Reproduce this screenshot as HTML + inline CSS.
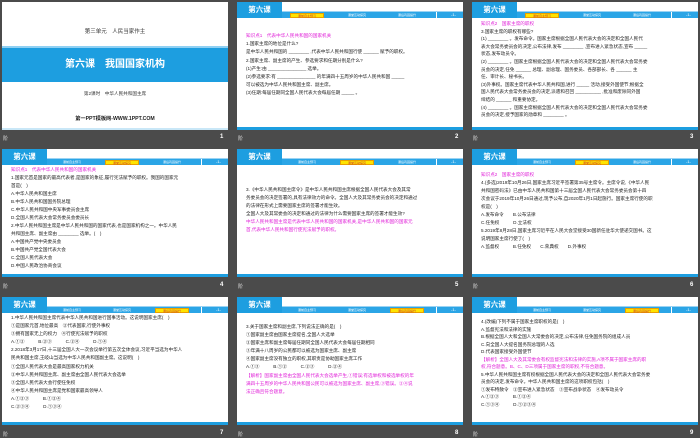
<!DOCTYPE html>
<html><head><meta charset="utf-8"><style>
*{margin:0;padding:0;box-sizing:border-box}
body{width:700px;height:438px;background:#4b4b4b;position:relative;overflow:hidden;font-family:"Liberation Sans","Noto Sans CJK SC",sans-serif}
.s{position:absolute;width:226px;height:128px;background:#fff;overflow:hidden}
.tab{position:absolute;left:0;top:0;width:45px;height:16px;background:#1d9ee0;color:#fff;font-size:7.5px;font-weight:bold;text-align:center;line-height:16px}
.strip{position:absolute;left:45px;top:9px;width:181px;height:7px;background:#2ba5e6;border-top:1px solid #9bd3f3}
.b{position:absolute;top:0.5px;width:34px;height:5px;font-size:3px;color:#fff;text-align:center;line-height:5px}
.b.y{background:#ffe400;color:#c33;border:0.5px solid #e9a000}
.sep{position:absolute;left:154px;top:0;width:1px;height:7px;background:#fff}
.pg{position:absolute;left:162px;top:0;width:19px;font-size:4px;color:#fff;text-align:center;line-height:6px}
.bot{position:absolute;left:0;bottom:0;width:226px;height:3px;background:#1d9ee0}
.t{position:absolute;left:9px;right:6px;font-size:4.6px;line-height:8.2px;color:#222;white-space:nowrap}
.m{color:#e021d8}
.lab{position:absolute;color:#ddd;font-size:5px}
.num{position:absolute;color:#fff;font-size:6px;font-weight:bold}
</style></head><body>

<div class="s" style="left:2px;top:2px">
 <div style="position:absolute;top:25px;width:100%;text-align:center;font-size:5.5px;color:#333">第三单元　人民当家作主</div>
 <div style="position:absolute;top:44px;width:100%;height:2px;background:#8fd0f3"></div>
 <div style="position:absolute;top:46px;width:100%;height:34px;background:#1d9ee0;color:#fff;font-size:10px;font-weight:bold;text-align:center;line-height:34px">第六课　我国国家机构</div>
 <div style="position:absolute;top:89px;width:100%;text-align:center;font-size:4.6px;color:#333">第2课时　中华人民共和国主席</div>
 <div style="position:absolute;top:113px;width:100%;text-align:center;font-size:5.2px;font-weight:bold;color:#222">第一PPT模板网-WWW.1PPT.COM</div>
 <div class="bot" style="height:2px;background:#c9e7f7"></div>
</div>

<div class="s" style="left:237px;top:2px">
 <div class="tab">第六课</div>
 <div class="strip"><div class="b y" style="left:8px">课前自主预习</div><div class="b" style="left:58px">课堂互动探究</div><div class="b" style="left:108px">课后巩固提升</div><div class="sep"></div><div class="pg">-1-</div></div>
 <div class="t" style="top:30px"><span class="m">知识点1　代表中华人民共和国的国家机关</span><br>1.国家主席的地位是什么?<br>是中华人民共和国的 ________ ,代表中华人民共和国行使 ______ 赋予的职权。<br>2.国家主席、副主席的产生、参选要求和任期分别是什么?<br>(1)产生:由 _______________ 选举。<br>(2)参选要求:有 _______________ 的年满四十五周岁的中华人民共和国 _____<br>可以被选为中华人民共和国主席、副主席。<br>(3)任期:每届任期同全国人民代表大会每届任期 _____ 。</div>
 <div class="bot"></div>
</div>

<div class="s" style="left:472px;top:2px">
 <div class="tab">第六课</div>
 <div class="strip"><div class="b y" style="left:8px">课前自主预习</div><div class="b" style="left:58px">课堂互动探究</div><div class="b" style="left:108px">课后巩固提升</div><div class="sep"></div><div class="pg">-1-</div></div>
 <div class="t" style="top:18px;line-height:7.6px"><span class="m">知识点2　国家主席的职权</span><br>3.国家主席的职权有哪些?<br>(1) ________ 。发布命令。国家主席根据全国人民代表大会的决定和全国人民代<br>表大会常务委员会的决定,公布法律,发布 ________ ,宣布进入紧急状态,宣布 _____<br>状态,发布动员令。<br>(2) ________ 。国家主席根据全国人民代表大会的决定和全国人民代表大会常务委<br>员会的决定,任免 ______ 总理、副总理、国务委员、各部部长、各 ______ 主<br>任、审计长、秘书长。<br>(3)外事权。国家主席代表中华人民共和国,进行 _____ 活动,接受外国使节;根据全<br>国人民代表大会常务委员会的决定,派遣和召回 __________ ,批准和废除同外国<br>缔结的 ______ 和重要协定。<br>(4) ________ 。国家主席根据全国人民代表大会的决定和全国人民代表大会常务委<br>员会的决定,授予国家的勋章和 ________ 。</div>
 <div class="bot"></div>
</div>

<div class="s" style="left:2px;top:149px">
 <div class="tab">第六课</div>
 <div class="strip"><div class="b" style="left:8px">课前自主预习</div><div class="b y" style="left:58px">课堂互动探究</div><div class="b" style="left:108px">课后巩固提升</div><div class="sep"></div><div class="pg">-1-</div></div>
 <div class="t" style="top:17px;line-height:8px"><span class="m">知识点1　代表中华人民共和国的国家机关</span><br>1.国家元首是国家的最高代表者,是国家的象征,履行宪法赋予的职权。我国的国家元<br>首是(　)<br>A.中华人民共和国主席<br>B.中华人民共和国国务院总理<br>C.中华人民共和国中央军事委员会主席<br>D.全国人民代表大会常务委员会委员长<br>2.中华人民共和国主席是中华人民共和国的国家代表,也是国家机构之一。中华人民<br>共和国主席、副主席由 ________ 选举。(　)<br>A.中国共产党中央委员会<br>B.中国共产党全国代表大会<br>C.全国人民代表大会<br>D.中国人民政治协商会议</div>
 <div class="bot"></div>
</div>

<div class="s" style="left:237px;top:149px">
 <div class="tab">第六课</div>
 <div class="strip"><div class="b" style="left:8px">课前自主预习</div><div class="b y" style="left:58px">课堂互动探究</div><div class="b" style="left:108px">课后巩固提升</div><div class="sep"></div><div class="pg">-1-</div></div>
 <div class="t" style="top:37px;line-height:8px">3.《中华人民共和国主席令》是中华人民共和国主席根据全国人民代表大会及其常<br>务委员会的决定签署的,具有法律效力的命令。全国人大及其常务委员会的决定和通过<br>的法律在形式上需要国家主席的签署才能生效。<br>全国人大及其常委会的决定和通过的法律为什么需要国家主席的签署才能生效?<br><span class="m">中华人民共和国主席是代表中华人民共和国的国家机关,是中华人民共和国的国家元<br>首,代表中华人民共和国行使宪法赋予的职权。</span></div>
 <div class="bot"></div>
</div>

<div class="s" style="left:472px;top:149px">
 <div class="tab">第六课</div>
 <div class="strip"><div class="b" style="left:8px">课前自主预习</div><div class="b y" style="left:58px">课堂互动探究</div><div class="b" style="left:108px">课后巩固提升</div><div class="sep"></div><div class="pg">-1-</div></div>
 <div class="t" style="top:22px;line-height:8px"><span class="m">知识点2　国家主席的职权</span><br>4.(多选)2019年10月26日,国家主席习近平签署第35号主席令。主席令说,《中华人民<br>共和国密码法》已由中华人民共和国第十三届全国人民代表大会常务委员会第十四<br>次会议于2019年10月26日通过,现予公布,自2020年1月1日起施行。国家主席行使的职<br>权是(　)<br>A.发布命令　　B.公布法律<br>C.任免权　　　D.立法权<br>5.2019年8月28日,国家主席习近平在人民大会堂接受30国新任驻华大使递交国书。这<br>说明国家主席行使了(　)<br>A.监督权　　　B.任免权　　C.荣典权　　D.外事权</div>
 <div class="bot"></div>
</div>

<div class="s" style="left:2px;top:297px">
 <div class="tab">第六课</div>
 <div class="strip"><div class="b" style="left:8px">课前自主预习</div><div class="b" style="left:58px">课堂互动探究</div><div class="b y" style="left:108px">课后巩固提升</div><div class="sep"></div><div class="pg">-1-</div></div>
 <div class="t" style="top:17px;line-height:8.1px">1.中华人民共和国主席代表中华人民共和国进行国事活动。这说明国家主席(　)<br>①是国家元首,地位最高　②代表国家,行使外事权<br>③拥有国家无上的权力　④行使宪法赋予的职权<br>A.①②　　　B.②③　　　C.②④　　　D.①④<br>2.2018年3月17日,十三届全国人大一次会议举行第五次全体会议,习近平当选为中华人<br>民共和国主席,王岐山当选为中华人民共和国副主席。这说明(　)<br>①全国人民代表大会是最高国家权力机关<br>②中华人民共和国主席、副主席由全国人民代表大会选举<br>③全国人民代表大会行使任免权<br>④中华人民共和国主席是党和国家最高领导人<br>A.①②③　　　B.①②④<br>C.②③④　　　D.①③④</div>
 <div class="bot"></div>
</div>

<div class="s" style="left:237px;top:297px">
 <div class="tab">第六课</div>
 <div class="strip"><div class="b" style="left:8px">课前自主预习</div><div class="b" style="left:58px">课堂互动探究</div><div class="b y" style="left:108px">课后巩固提升</div><div class="sep"></div><div class="pg">-1-</div></div>
 <div class="t" style="top:26px;line-height:8.1px">3.关于国家主席和副主席,下列说法正确的是(　)<br>①国家副主席由国家主席提名,全国人大选举<br>②国家主席和副主席每届任期同全国人民代表大会每届任期相同<br>③年满十八周岁的公民都可以被选为国家主席、副主席<br>④国家副主席没有独立的职权,其职责是协助国家主席工作<br>A.①③　　　B.①②　　　C.②③　　　D.②④<br><span class="m">【解析】国家副主席由全国人民代表大会选举产生,①错误;有选举权和被选举权的年<br>满四十五周岁的中华人民共和国公民可以被选为国家主席、副主席,③错误。②④说<br>法正确且符合题意。</span></div>
 <div class="bot"></div>
</div>

<div class="s" style="left:472px;top:297px">
 <div class="tab">第六课</div>
 <div class="strip"><div class="b" style="left:8px">课前自主预习</div><div class="b" style="left:58px">课堂互动探究</div><div class="b y" style="left:108px">课后巩固提升</div><div class="sep"></div><div class="pg">-1-</div></div>
 <div class="t" style="top:21px;line-height:7.5px">4.(改编)下列不属于国家主席职权的是(　)<br>A.监督宪法和法律的实施<br>B.根据全国人大和全国人大常委会的决定,公布法律,任免国务院的组成人员<br>C.向全国人大提名国务院总理的人选<br>D.代表国家接受外国使节<br><span class="m">【解析】全国人大及其常委会有权监督宪法和法律的实施,A项不属于国家主席的职<br>权,符合题意。B、C、D三项属于国家主席的职权,不符合题意。</span><br>5.中华人民共和国主席有权根据全国人民代表大会的决定和全国人民代表大会常务委<br>员会的决定,发布命令。中华人民共和国主席的这项职权包括(　)<br>①发布特赦令　②宣布进入紧急状态　③宣布战争状态　④发布动员令<br>A.①②③　　　B.①②④<br>C.①③④　　　D.①②③④</div>
 <div class="bot"></div>
</div>

<div class="lab" style="left:3px;top:135px">阶</div><div class="num" style="left:220px;top:134px">1</div>
<div class="lab" style="left:238px;top:135px">阶</div><div class="num" style="left:455px;top:134px">2</div>
<div class="lab" style="left:473px;top:135px">阶</div><div class="num" style="left:690px;top:134px">3</div>
<div class="lab" style="left:3px;top:283px">阶</div><div class="num" style="left:220px;top:282px">4</div>
<div class="lab" style="left:238px;top:283px">阶</div><div class="num" style="left:455px;top:282px">5</div>
<div class="lab" style="left:473px;top:283px">阶</div><div class="num" style="left:690px;top:282px">6</div>
<div class="lab" style="left:3px;top:431px">阶</div><div class="num" style="left:220px;top:430px">7</div>
<div class="lab" style="left:238px;top:431px">阶</div><div class="num" style="left:455px;top:430px">8</div>
<div class="lab" style="left:473px;top:431px">阶</div><div class="num" style="left:690px;top:430px">9</div>
</body></html>
